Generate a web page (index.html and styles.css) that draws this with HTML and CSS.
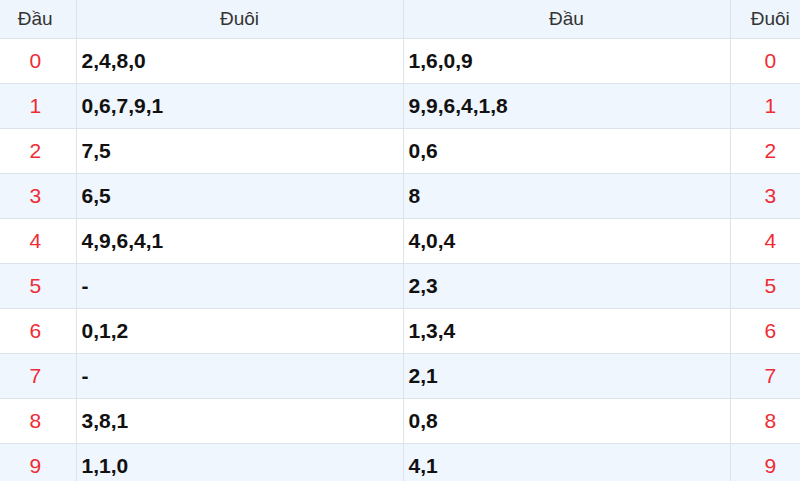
FILE: index.html
```html
<!DOCTYPE html>
<html lang="vi">
<head>
<meta charset="utf-8">
<link rel="stylesheet" href="styles.css">
</head>
<body>
<table class="lt">
  <colgroup>
    <col class="c-num"><col class="c-val"><col class="c-val2"><col class="c-num2">
  </colgroup>
  <thead>
    <tr><th class="first">Đầu</th><th>Đuôi</th><th>Đầu</th><th class="last">Đuôi</th></tr>
  </thead>
  <tbody>
    <tr><td class="n first">0</td><td class="v">2,4,8,0</td><td class="v">1,6,0,9</td><td class="n last">0</td></tr>
    <tr><td class="n first">1</td><td class="v">0,6,7,9,1</td><td class="v">9,9,6,4,1,8</td><td class="n last">1</td></tr>
    <tr><td class="n first">2</td><td class="v">7,5</td><td class="v">0,6</td><td class="n last">2</td></tr>
    <tr><td class="n first">3</td><td class="v">6,5</td><td class="v">8</td><td class="n last">3</td></tr>
    <tr><td class="n first">4</td><td class="v">4,9,6,4,1</td><td class="v">4,0,4</td><td class="n last">4</td></tr>
    <tr><td class="n first">5</td><td class="v">-</td><td class="v">2,3</td><td class="n last">5</td></tr>
    <tr><td class="n first">6</td><td class="v">0,1,2</td><td class="v">1,3,4</td><td class="n last">6</td></tr>
    <tr><td class="n first">7</td><td class="v">-</td><td class="v">2,1</td><td class="n last">7</td></tr>
    <tr><td class="n first">8</td><td class="v">3,8,1</td><td class="v">0,8</td><td class="n last">8</td></tr>
    <tr><td class="n first">9</td><td class="v">1,1,0</td><td class="v">4,1</td><td class="n last">9</td></tr>
  </tbody>
</table>
</body>
</html>
```
FILE: styles.css
```css
html, body {
  margin: 0;
  padding: 0;
  background: #fff;
}
body {
  font-family: "Liberation Sans", Arial, sans-serif;
  overflow: hidden;
}
.lt {
  width: 800px;
  border-collapse: collapse;
  table-layout: fixed;
}
.c-num { width: 76px; }
.c-val { width: 327px; }
.c-val2 { width: 327px; }
.c-num2 { width: 70px; }
.lt th, .lt td {
  border: 1px solid #dde3ea;
  padding: 0 5px;
}
.lt tr > .first { border-left: none; padding-left: 0; padding-right: 5px; }
.lt tr > .last { border-right: none; padding-left: 10px; padding-right: 0; }
.lt thead tr > * { border-top: none; }
.lt th {
  height: 38px;
  background: #eef5fc;
  font-weight: normal;
  font-size: 19px;
  color: #333;
  text-align: center;
}
.lt td {
  height: 44px;
  font-size: 21px;
}
.lt tbody tr:nth-child(even) td {
  background: #eff6fd;
}
.n {
  text-align: center;
  color: #ef2b36;
}
.v {
  font-weight: bold;
  color: #111;
  text-align: left;
}
```
